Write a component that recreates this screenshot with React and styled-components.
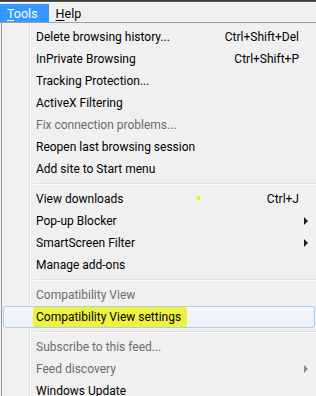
import React from "react";
import styled, { createGlobalStyle, css } from "styled-components";

const GlobalStyle = createGlobalStyle`
  html, body {
    margin: 0;
    padding: 0;
    background: #f0f0f0;
  }
  body {
    font-family: Roboto, "Noto Sans", sans-serif;
    font-size: 12px;
  }
`;

const Frame = styled.div`
  width: 316px;
  height: 396px;
  overflow: hidden;
  background: #f0f0f0;
  display: flex;
  flex-direction: column;
`;

const WindowEdge = styled.div`
  height: 2px;
  flex: none;
  background: linear-gradient(to bottom, #2b2b2b, #6a6a6a);
`;

const MenuBar = styled.div`
  display: flex;
  align-items: stretch;
  flex: none;
  height: 18px;
  padding-top: 2px;
  border-bottom: 1px solid #a0a0a0;
  background: #f0f0f0;
`;

const BarTitle = styled.div`
  display: flex;
  align-items: center;
  padding: 0 7px;
  color: #000;
  font-size: 12.5px;
  u {
    text-decoration: underline;
    text-underline-offset: 2px;
  }
  ${(p) =>
    p.active &&
    css`
      background: #3399ff;
      color: #fff;
      padding: 0 11px 0 7px;
    `}
`;

const Dropdown = styled.div`
  flex: 1;
  margin-left: 1px;
  border-left: 1px solid #979797;
  padding-top: 3px;
  background: linear-gradient(
    to right,
    #f1f1f1 0,
    #f1f1f1 27px,
    #e2e3e3 27px,
    #e2e3e3 28px,
    #ffffff 28px,
    #ffffff 29px,
    #f0f0f0 29px
  );
`;

const Item = styled.div`
  position: relative;
  display: grid;
  grid-template-columns: 33px 1fr auto 17px;
  align-items: center;
  height: 22px;
  margin-left: 1px;
  font-size: 12px;
  color: ${(p) => (p.disabled ? "#6d6d6d" : "#000")};
  white-space: nowrap;
  ${(p) =>
    p.selected &&
    css`
      box-sizing: border-box;
      border: 1px solid #a9cdf3;
      border-radius: 3px;
      margin-right: 1px;
      background: linear-gradient(to bottom, #f4f6fa, #edf1f8);
      grid-template-columns: 32px 1fr auto 16px;
    `}
`;

const Label = styled.span`
  grid-column: 2;
  align-self: stretch;
  display: flex;
  align-items: center;
`;

const Highlighter = styled.span`
  display: flex;
  align-items: center;
  align-self: stretch;
  background: #eef23c;
  margin-left: -3px;
  padding: 0 6px 0 3px;
  border-radius: 2px;
`;

const Shortcut = styled.span`
  grid-column: 3;
  text-align: right;
`;

const Arrow = styled.span`
  grid-column: 4;
  justify-self: start;
  margin-left: 5px;
  width: 0;
  height: 0;
  border-top: 4px solid transparent;
  border-bottom: 4px solid transparent;
  border-left: 4px solid ${(p) => (p.disabled ? "#8a8a8a" : "#1e1e1e")};
`;

const Mark = styled.span`
  position: absolute;
  left: 194px;
  top: 8px;
  width: 3px;
  height: 4px;
  background: #f2ee1a;
`;

const Separator = styled.div`
  height: 8px;
  display: flex;
  align-items: center;
  padding-left: 31px;
  &::after {
    content: "";
    flex: 1;
    height: 1px;
    background: #e0e0e0;
    border-bottom: 1px solid #ffffff;
  }
`;

const groups = [
  [
    { label: "Delete browsing history...", shortcut: "Ctrl+Shift+Del" },
    { label: "InPrivate Browsing", shortcut: "Ctrl+Shift+P" },
    { label: "Tracking Protection..." },
    { label: "ActiveX Filtering" },
    { label: "Fix connection problems...", disabled: true },
    { label: "Reopen last browsing session" },
    { label: "Add site to Start menu" },
  ],
  [
    { label: "View downloads", shortcut: "Ctrl+J", mark: true },
    { label: "Pop-up Blocker", submenu: true },
    { label: "SmartScreen Filter", submenu: true },
    { label: "Manage add-ons" },
  ],
  [
    { label: "Compatibility View", disabled: true },
    { label: "Compatibility View settings", selected: true, marked: true },
  ],
  [
    { label: "Subscribe to this feed...", disabled: true },
    { label: "Feed discovery", disabled: true, submenu: true },
    { label: "Windows Update" },
  ],
];

const MenuItem = ({ item }) => (
  <Item disabled={item.disabled} selected={item.selected}>
    <Label>
      {item.marked ? <Highlighter>{item.label}</Highlighter> : item.label}
    </Label>
    {item.shortcut && <Shortcut>{item.shortcut}</Shortcut>}
    {item.submenu && <Arrow disabled={item.disabled} />}
    {item.mark && <Mark />}
  </Item>
);

export default function App() {
  return (
    <Frame>
      <GlobalStyle />
      <WindowEdge />
      <MenuBar>
        <BarTitle active>
          <span>
            <u>T</u>ools
          </span>
        </BarTitle>
        <BarTitle>
          <span>
            <u>H</u>elp
          </span>
        </BarTitle>
      </MenuBar>
      <Dropdown>
        {groups.map((group, i) => (
          <React.Fragment key={i}>
            {i > 0 && <Separator />}
            {group.map((item) => (
              <MenuItem key={item.label} item={item} />
            ))}
          </React.Fragment>
        ))}
      </Dropdown>
    </Frame>
  );
}
